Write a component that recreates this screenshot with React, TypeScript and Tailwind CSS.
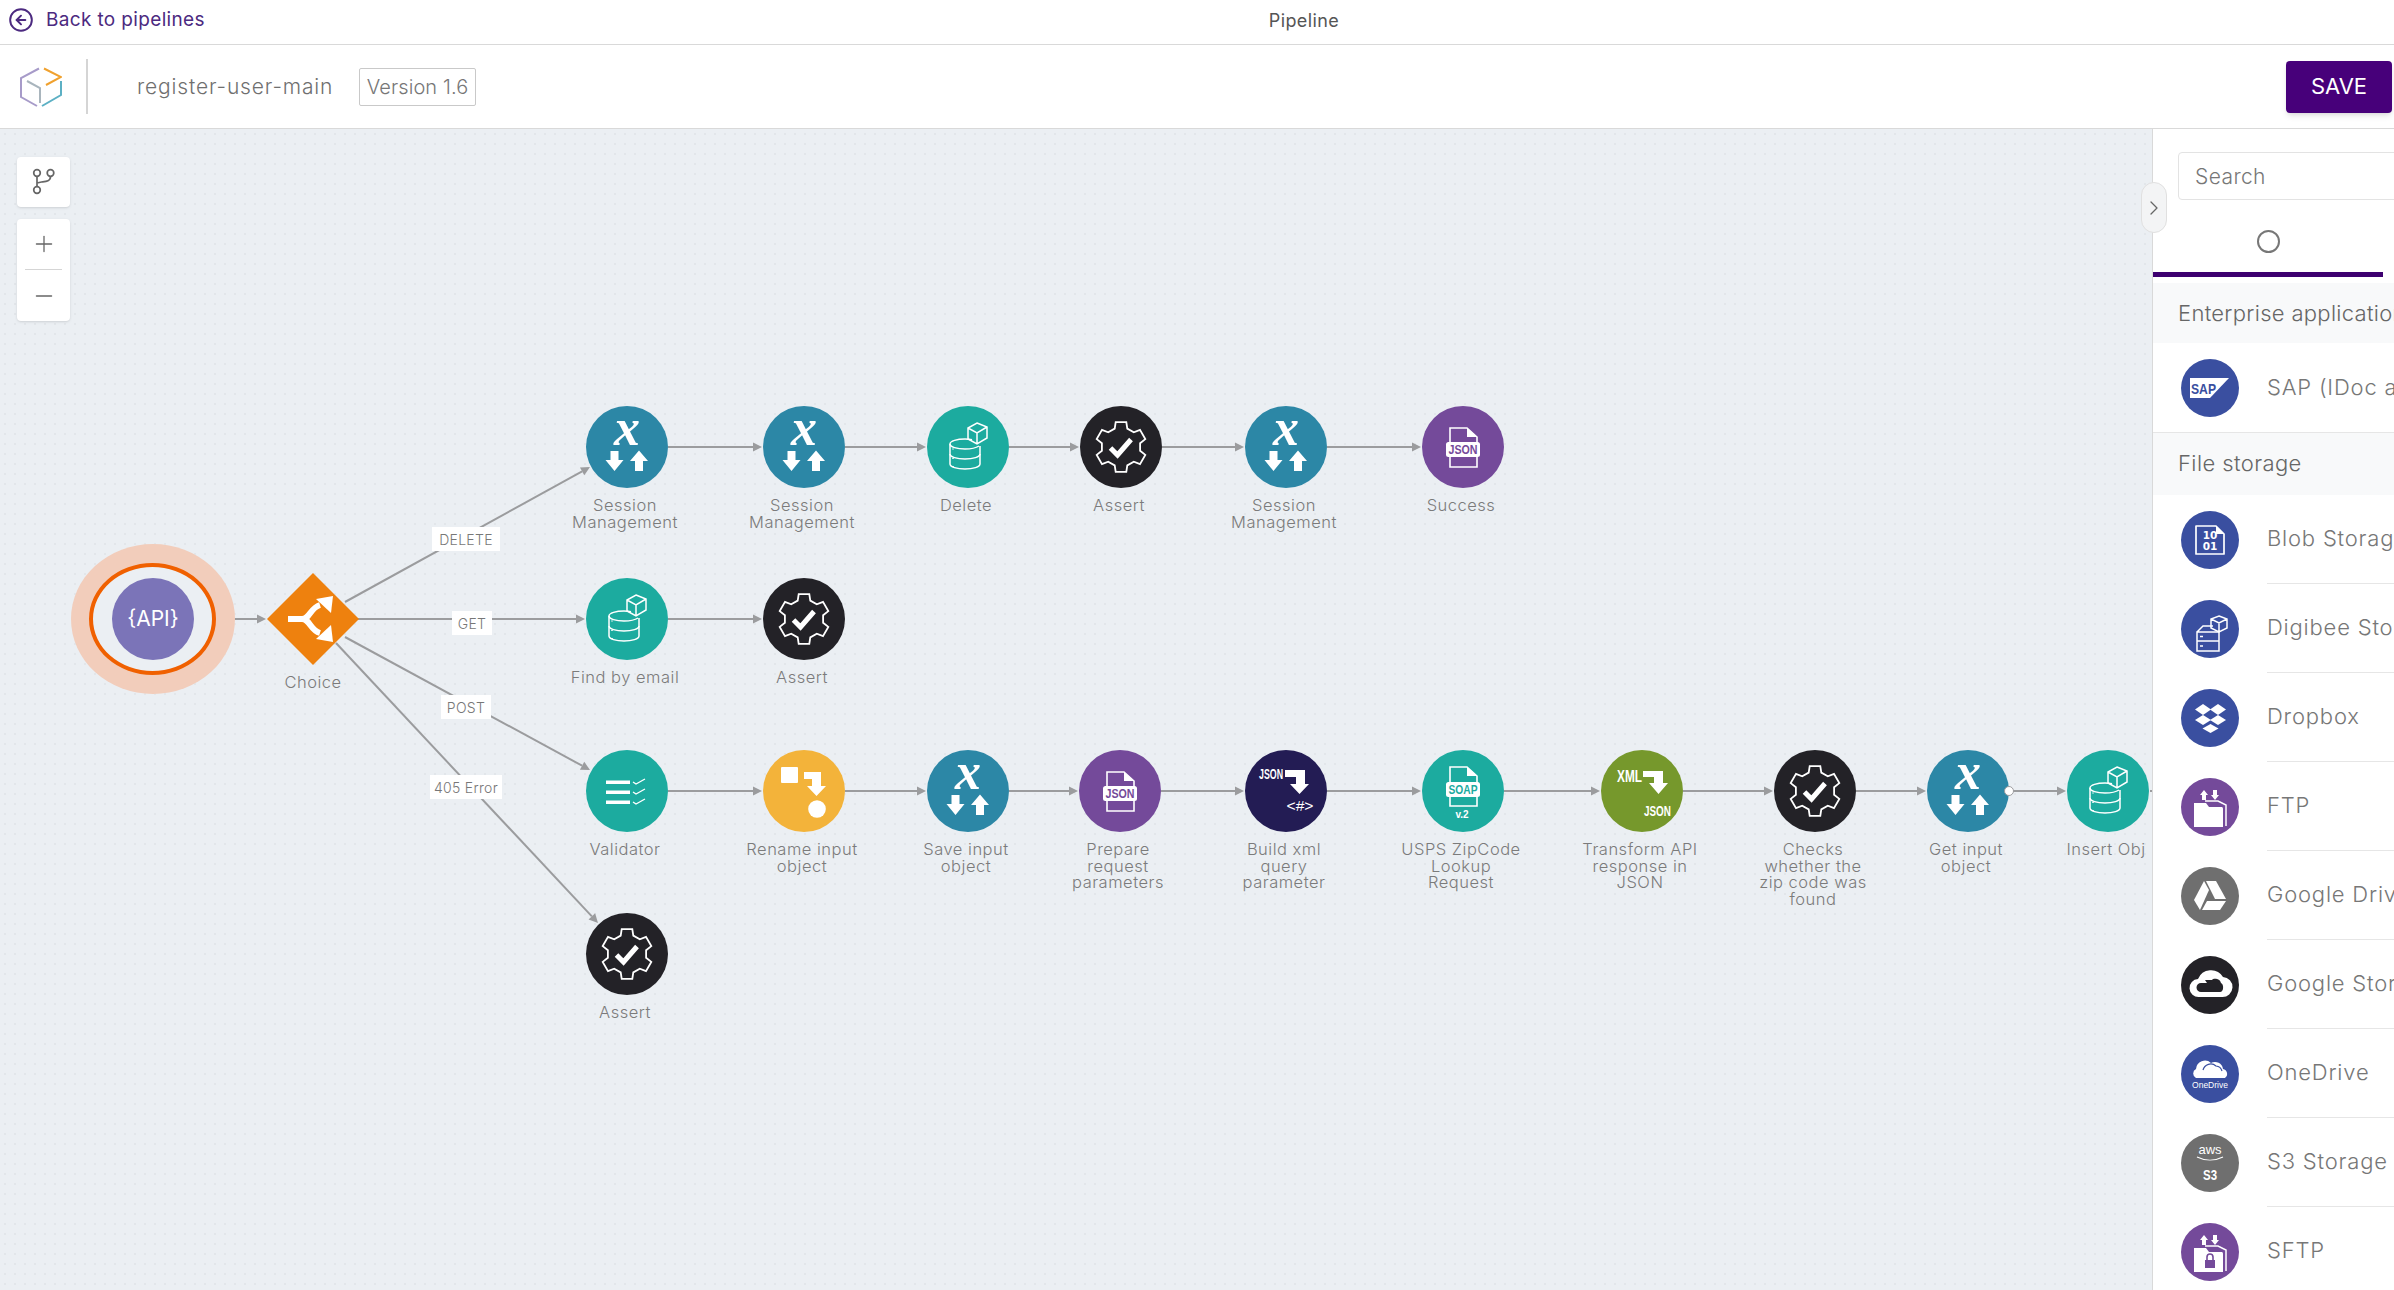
import { ChevronRight, CircleArrowLeft, Minus, Plus } from "lucide-react";
import type { ReactNode } from "react";

const narrow = "Liberation Sans";

// --- pipeline step icons, all in an 82x82 box ---
const gear = Array.from({ length: 6 }, (_, i) => {
  const a = -90 + i * 60;
  return [
    [19.5, a - 19],
    [25.5, a - 12],
    [25.5, a + 12],
    [19.5, a + 19],
  ]
    .map(([r, d]) => {
      const rad = (d * Math.PI) / 180;
      return `${(41 + r * Math.cos(rad)).toFixed(1)},${(41 + r * Math.sin(rad)).toFixed(1)}`;
    })
    .join(" ");
}).join(" ");

function AssertIcon() {
  return (
    <>
      <polygon points={gear} fill="none" stroke="#fff" strokeWidth="1.8" />
      <polyline points="30.5,42 37.5,49 51,33.5" fill="none" stroke="#fff" strokeWidth="5" />
    </>
  );
}

function SessionIcon() {
  return (
    <>
      <text x="41" y="39" textAnchor="middle" fontFamily="Liberation Serif" fontStyle="italic" fontWeight="700" fontSize="52" fill="#fff">
        x
      </text>
      <polygon points="24.5,45 32.5,45 32.5,54 37.5,54 28.5,65 19.5,54 24.5,54" fill="#fff" />
      <polygon points="49,65 57,65 57,55 62,55 53,44.5 44,55 49,55" fill="#fff" />
    </>
  );
}

function DbIcon() {
  return (
    <g fill="none" stroke="#fff" strokeWidth="1.5">
      <path d="M23 38c0-3 7-5 15-5 3 0 5 .3 7 .8M23 38v20c0 3 7 5 15 5s15-2 15-5V40" />
      <path d="M23 38c0 3 7 5 15 5 6 0 11-1 14-3M23 48c0 3 7 5 15 5s15-2 15-5" />
      <path d="M50 17l10 4v11l-10 6-9-5V22zM41 22l9 5 10-6M50 27v11" />
      <path d="M26 42.5v1M26 52v1M26 60v1" />
    </g>
  );
}

function FileBadge({ label, fill, top, bottom, badgeY }: { label: string; fill: string; top: number; bottom: number; badgeY: number }) {
  return (
    <>
      <path d={`M28 ${top}h17l10 9v${bottom - top - 9}H28z`} fill="none" stroke="#fff" strokeWidth="1.6" />
      <path d={`M45 ${top}v9h10z`} fill="#fff" />
      <rect x="24" y={badgeY} width="34" height="15" rx="2.5" fill="#fff" />
      <text x="41" y={badgeY + 12} textAnchor="middle" fontFamily={narrow} fontWeight="700" fontSize="13" textLength="29" lengthAdjust="spacingAndGlyphs" fill={fill}>
        {label}
      </text>
    </>
  );
}

function ValidatorIcon() {
  return (
    <g>
      <rect x="20" y="30.5" width="24" height="3.5" fill="#fff" />
      <rect x="20" y="40.5" width="24" height="3.5" fill="#fff" />
      <rect x="20" y="50.5" width="24" height="3.5" fill="#fff" />
      <path d="M47 32l3 2 9-5M47 42l3 2 9-5M47 52l3 2 9-5" fill="none" stroke="#fff" strokeWidth="1.3" />
    </g>
  );
}

function RenameIcon() {
  return (
    <>
      <rect x="18" y="17" width="17" height="16" rx="1" fill="#fff" />
      <path d="M41 22h17v14h5l-9.500 10-9.500-10h5v-7h-8z" fill="#fff" />
      <circle cx="54" cy="59" r="8.800" fill="#fff" />
    </>
  );
}

function BuildXmlIcon() {
  return (
    <>
      <text x="14" y="29" fontFamily={narrow} fontWeight="700" fontSize="14" textLength="24" lengthAdjust="spacingAndGlyphs" fill="#fff">
        JSON
      </text>
      <path d="M40 20h20v14h4l-9.500 10-9.500-10h6v-7h-11z" fill="#fff" />
      <text x="55" y="61" textAnchor="middle" fontFamily={narrow} fontWeight="400" fontSize="14.500" textLength="27" lengthAdjust="spacingAndGlyphs" fill="#fff">
        {"<#>"}
      </text>
    </>
  );
}

function SoapIcon() {
  return (
    <>
      <FileBadge label="SOAP" fill="#1cab9f" top={17} bottom={56} badgeY={32} />
      <text x="40" y="68" textAnchor="middle" fontFamily={narrow} fontWeight="700" fontSize="10" fill="#fff">
        v.2
      </text>
    </>
  );
}

function XmlJsonIcon() {
  return (
    <>
      <text x="16" y="32" fontFamily={narrow} fontWeight="700" fontSize="17" textLength="25" lengthAdjust="spacingAndGlyphs" fill="#fff">
        XML
      </text>
      <path d="M42 21h20v12h5l-9.500 11-9.500-11h5v-6h-11z" fill="#fff" />
      <text x="43" y="66" fontFamily={narrow} fontWeight="700" fontSize="15" textLength="27" lengthAdjust="spacingAndGlyphs" fill="#fff">
        JSON
      </text>
    </>
  );
}

const stepStyles: Record<string, { bg: string; icon: ReactNode }> = {
  session: { bg: "bg-[#2c87a6]", icon: <SessionIcon /> },
  db: { bg: "bg-[#1cab9f]", icon: <DbIcon /> },
  assert: { bg: "bg-[#232227]", icon: <AssertIcon /> },
  json: { bg: "bg-[#744a9a]", icon: <FileBadge label="JSON" fill="#744a9a" top={22} bottom={61} badgeY={36} /> },
  validator: { bg: "bg-[#1cab9f]", icon: <ValidatorIcon /> },
  rename: { bg: "bg-[#f3b33a]", icon: <RenameIcon /> },
  build: { bg: "bg-[#231c54]", icon: <BuildXmlIcon /> },
  soap: { bg: "bg-[#1cab9f]", icon: <SoapIcon /> },
  xml: { bg: "bg-[#76982c]", icon: <XmlJsonIcon /> },
};

const r1 = 318;
const r2 = 490;
const r3 = 662;
const r4 = 825;

const steps = [
  { x: 627, y: r1, kind: "session", label: ["Session", "Management"] },
  { x: 804, y: r1, kind: "session", label: ["Session", "Management"] },
  { x: 968, y: r1, kind: "db", label: ["Delete"] },
  { x: 1121, y: r1, kind: "assert", label: ["Assert"] },
  { x: 1286, y: r1, kind: "session", label: ["Session", "Management"] },
  { x: 1463, y: r1, kind: "json", label: ["Success"] },
  { x: 627, y: r2, kind: "db", label: ["Find by email"] },
  { x: 804, y: r2, kind: "assert", label: ["Assert"] },
  { x: 627, y: r3, kind: "validator", label: ["Validator"] },
  { x: 804, y: r3, kind: "rename", label: ["Rename input", "object"] },
  { x: 968, y: r3, kind: "session", label: ["Save input", "object"] },
  { x: 1120, y: r3, kind: "json", label: ["Prepare", "request", "parameters"] },
  { x: 1286, y: r3, kind: "build", label: ["Build xml", "query", "parameter"] },
  { x: 1463, y: r3, kind: "soap", label: ["USPS ZipCode", "Lookup", "Request"] },
  { x: 1642, y: r3, kind: "xml", label: ["Transform API", "response in", "JSON"] },
  { x: 1815, y: r3, kind: "assert", label: ["Checks", "whether the", "zip code was", "found"] },
  { x: 1968, y: r3, kind: "session", label: ["Get input", "object"] },
  { x: 2108, y: r3, kind: "db", label: ["Insert Obj"] },
  { x: 627, y: r4, kind: "assert", label: ["Assert"] },
];

const edges = [
  [194, r2, 266, r2],
  [358, r2, 585, r2],
  [345, 473, 590, 338],
  [345, 508, 590, 641],
  [336, 514, 598, 794],
  [668, r1, 762, r1],
  [845, r1, 926, r1],
  [1009, r1, 1079, r1],
  [1162, r1, 1244, r1],
  [1327, r1, 1421, r1],
  [668, r2, 762, r2],
  [668, r3, 762, r3],
  [845, r3, 926, r3],
  [1009, r3, 1078, r3],
  [1161, r3, 1244, r3],
  [1327, r3, 1421, r3],
  [1504, r3, 1600, r3],
  [1683, r3, 1773, r3],
  [1856, r3, 1926, r3],
  [2009, r3, 2066, r3],
];

function Edges() {
  return (
    <svg className="absolute left-0 top-0" width="2152" height="1161">
      {edges.map(([x1, y1, x2, y2], i) => {
        const a = Math.atan2(y2 - y1, x2 - x1);
        const bx = x2 - 9 * Math.cos(a);
        const by = y2 - 9 * Math.sin(a);
        const nx = 4.5 * Math.sin(a);
        const ny = 4.5 * Math.cos(a);
        return (
          <g key={i}>
            <line x1={x1} y1={y1} x2={bx} y2={by} stroke="#9b9c9e" strokeWidth="2" />
            <polygon points={`${x2},${y2} ${bx + nx},${by - ny} ${bx - nx},${by + ny}`} fill="#9b9c9e" />
          </g>
        );
      })}
      <line x1="2150" y1={r3} x2="2152" y2={r3} stroke="#9b9c9e" strokeWidth="2" />
    </svg>
  );
}

function Step({ x, y, kind, label }: { x: number; y: number; kind: string; label: string[] }) {
  const s = stepStyles[kind];
  return (
    <>
      <div className={`absolute h-[82px] w-[82px] rounded-full ${s.bg}`} style={{ left: x - 41, top: y - 41 }}>
        <svg className="overflow-visible" width="82" height="82" viewBox="0 0 82 82">
          {s.icon}
        </svg>
      </div>
      <div
        className="absolute w-[150px] text-center text-[16.5px] leading-[16.5px] tracking-[0.5px] text-[#7b7b7b]"
        style={{ left: x - 77, top: y + 50 }}
      >
        {label.map((l) => (
          <div key={l} className="whitespace-nowrap">
            {l}
          </div>
        ))}
      </div>
    </>
  );
}

function EdgeLabel({ x, y, w, text }: { x: number; y: number; w: number; text: string }) {
  return (
    <div
      className="absolute flex h-[24px] items-center justify-center bg-white text-[14px] tracking-[0.3px] whitespace-nowrap text-[#777]"
      style={{ left: x, top: y, width: w }}
    >
      {text}
    </div>
  );
}

function ApiTrigger() {
  return (
    <>
      <div className="absolute left-[71px] top-[415px] h-[150px] w-[164px] rounded-[50%] bg-[#f2cdbb]" />
      <div className="absolute left-[89px] top-[434px] h-[112px] w-[127px] rounded-[50%] border-[4px] border-[#f06000] bg-[#ebeff3]" />
      <div className="absolute left-[112px] top-[449px] flex h-[82px] w-[82px] items-center justify-center rounded-full bg-[#7b74b8] text-[21px] font-normal text-white">
        {"{API}"}
      </div>
    </>
  );
}

function Choice() {
  return (
    <>
      <svg className="absolute left-[266px] top-[443px]" width="94" height="94" viewBox="0 0 94 94">
        <polygon points="47,1 93,47 47,93 1,47" fill="#ee810e" />
        <path d="M22 47h14c8 0 8-11 18-14" fill="none" stroke="#fff" strokeWidth="6" />
        <path d="M36 47c8 0 8 11 18 14" fill="none" stroke="#fff" strokeWidth="6" />
        <polygon points="50,27 67,24 65,41" fill="#fff" />
        <polygon points="50,67 67,70 65,53" fill="#fff" />
      </svg>
      <div className="absolute left-[263px] top-[544px] w-[100px] text-center text-[16.5px] leading-[18px] tracking-[0.5px] text-[#7b7b7b]">Choice</div>
    </>
  );
}

// --- connector palette icons, 58x58 ---
function Folder({ children }: { children?: ReactNode }) {
  return (
    <>
      <polygon points="23,12 27,17 25,17 25,22 21,22 21,17 19,17" fill="#fff" />
      <polygon points="34,22 38,17 36,17 36,12 32,12 32,17 30,17" fill="#fff" />
      <path d="M13 25h12l3 4h13a2 2 0 0 1 1 2v18H13z" fill="#fff" />
      <path d="M24 23h13l8 4v21" fill="none" stroke="#fff" strokeWidth="1.500" />
      {children}
    </>
  );
}

const blue = "bg-[#3a4fa0]";
const purple = "bg-[#744a9a]";
const gray = "bg-[#6f6f6f]";

const sapIcon = (
  <>
    <polygon points="9,19 48,19 29,39 9,39" fill="#fff" />
    <text x="10" y="35" fontFamily={narrow} fontWeight="700" fontSize="15" textLength="25" lengthAdjust="spacingAndGlyphs" fill="#3a4fa0">
      SAP
    </text>
  </>
);

const blobIcon = (
  <>
    <path d="M15 15h20l8 8v20H15z" fill="none" stroke="#fff" strokeWidth="1.700" strokeLinejoin="round" />
    <path d="M35 15v8h8z" fill="#fff" />
    <text x="29" y="28" textAnchor="middle" fontFamily="DejaVu Sans" fontWeight="700" fontSize="10.500" fill="#fff">
      10
    </text>
    <text x="29" y="39" textAnchor="middle" fontFamily="DejaVu Sans" fontWeight="700" fontSize="10.500" fill="#fff">
      01
    </text>
  </>
);

const digibeeIcon = (
  <g fill="none" stroke="#fff" strokeWidth="1.500">
    <path d="M16 32l6-6h10M16 32h22v9H16zM16 41h22v10H16z" />
    <path d="M38 16l8 3v9l-8 4-8-4v-9zM30 19l8 4 8-4M38 23v9" />
    <path d="M19 36.500h3M19 46h3" />
  </g>
);

const dropboxIcon = (
  <g fill="#fff">
    <polygon points="22,15 30,20.500 22,26 14,20.500" />
    <polygon points="37,15 45,20.500 37,26 29,20.500" />
    <polygon points="22,26 30,31 22,36 14,31" />
    <polygon points="37,26 45,31 37,36 29,31" />
    <polygon points="29.500,35 37.500,39.500 29.500,44 21.500,39.500" />
  </g>
);

const driveIcon = (
  <g fill="#fff">
    <polygon points="23,14 28,23 19,43 13,33" />
    <polygon points="25,14 35,14 45,32 34,32" />
    <polygon points="26,34 45,34 39,43 21,43" />
  </g>
);

const storageIcon = (
  <>
    <path d="M18 41a9 9 0 0 1-1-18 14 14 0 0 1 25-2 10 10 0 0 1 -1 20z" fill="#fff" />
    <path d="M20 36a4.500 4.500 0 0 1 0-9h6l-2-3h7c1-2 8-2 9 3 3 1 3 9-1 9z" fill="#232227" />
  </>
);

const oneDriveIcon = (
  <>
    <path d="M15 33a5 5 0 0 1 0-9 9 9 0 0 1 15-6 8 8 0 0 1 12 6 5 5 0 0 1 2 9z" fill="#fff" />
    <path d="M22 25a8 8 0 0 1 13-4 7 7 0 0 1 6 5" fill="none" stroke="#3a4fa0" strokeWidth="1.200" />
    <text x="29" y="43" textAnchor="middle" fontFamily={narrow} fontSize="8.500" fill="#fff">
      OneDrive
    </text>
  </>
);

const s3Icon = (
  <>
    <text x="29" y="20" textAnchor="middle" fontFamily={narrow} fontSize="13" fill="#fff">
      aws
    </text>
    <path d="M16 23c8 4 18 4 26 0" fill="none" stroke="#fff" strokeWidth="1.200" />
    <text x="29" y="46" textAnchor="middle" fontFamily={narrow} fontWeight="700" fontSize="15" textLength="14" lengthAdjust="spacingAndGlyphs" fill="#fff">
      S3
    </text>
  </>
);

const sftpIcon = (
  <Folder>
    <rect x="24" y="37" width="10" height="8" fill="#744a9a" />
    <path d="M26 37v-3a3 3 0 0 1 6 0v3" fill="none" stroke="#744a9a" strokeWidth="1.600" />
  </Folder>
);

const fileStorage = [
  { name: "Blob Storage (Azure)", bg: blue, icon: blobIcon },
  { name: "Digibee Storage", bg: blue, icon: digibeeIcon },
  { name: "Dropbox", bg: blue, icon: dropboxIcon },
  { name: "FTP", bg: purple, icon: <Folder /> },
  { name: "Google Drive", bg: gray, icon: driveIcon },
  { name: "Google Storage", bg: "bg-[#232227]", icon: storageIcon },
  { name: "OneDrive", bg: blue, icon: oneDriveIcon },
  { name: "S3 Storage (AWS)", bg: gray, icon: s3Icon },
  { name: "SFTP", bg: purple, icon: sftpIcon },
];

function PaletteIcon({ bg, children }: { bg: string; children: ReactNode }) {
  return (
    <div className={`h-[58px] w-[58px] shrink-0 rounded-full ${bg}`}>
      <svg width="58" height="58" viewBox="0 0 58 58">
        {children}
      </svg>
    </div>
  );
}

function Logo() {
  return (
    <svg width="42" height="40" viewBox="0 0 42 40" fill="none" strokeWidth="2">
      <polyline points="19,1.500 1,11 1,30 17,39" stroke="#a79bc9" />
      <polyline points="7,14 20,21 20,36" stroke="#a9b5bd" />
      <polyline points="22,39 41,28 41,14" stroke="#5cb0c4" />
      <polyline points="24,1.500 41,10 26,18" stroke="#f0a12e" />
    </svg>
  );
}

export default function App() {
  return (
    <div className="flex h-[1290px] w-[2394px] flex-col overflow-hidden bg-white font-[Inter,sans-serif] font-light">
      {/* top bar */}
      <div className="grid h-[45px] shrink-0 grid-cols-[1204px_200px_1fr] items-center border-b border-[#d9d9d9] pb-1">
        <div className="flex items-center gap-[12px] pl-[8px] text-[19px] font-normal tracking-[0.35px] text-[#4c2a80]">
          <CircleArrowLeft size={26} strokeWidth={1.8} />
          <span>Back to pipelines</span>
        </div>
        <div className="text-center text-[18px] font-normal tracking-[0.4px] text-[#555]">Pipeline</div>
      </div>

      {/* name bar */}
      <div className="flex h-[84px] shrink-0 items-center border-b border-[#d9d9d9] pr-[2px]">
        <div className="ml-[20px] shrink-0">
          <Logo />
        </div>
        <div className="ml-[24px] h-[55px] w-[2px] shrink-0 bg-[#d5d5d5]" />
        <div className="ml-[49px] w-[222px] text-[21px] tracking-[0.85px] text-[#6f6f6f]">register-user-main</div>
        <div className="flex h-[38px] w-[117px] items-center justify-center rounded-[2px] border border-[#c9c9c9] text-[20px] tracking-[0.1px] text-[#777]">
          Version 1.6
        </div>
        <button className="ml-auto h-[52px] w-[106px] rounded-[4px] bg-[#47007a] text-[22px] font-normal text-white shadow-md">SAVE</button>
      </div>

      <div className="flex min-h-0 flex-1">
        {/* canvas */}
        <div className="relative w-[2152px] shrink-0 overflow-hidden bg-[#ebeff3] bg-[radial-gradient(#e2e6ea_1px,transparent_1px)] bg-[length:10px_10px]">
          <Edges />
          <ApiTrigger />
          <Choice />
          {steps.map((s, i) => (
            <Step key={i} {...s} />
          ))}
          {/* output handle of the hovered step */}
          <div className="absolute left-[2004px] top-[657px] h-[10px] w-[10px] rounded-full border-[1.5px] border-[#9b9c9e] bg-white" />
          <EdgeLabel x={432} y={398} w={68} text="DELETE" />
          <EdgeLabel x={452} y={482} w={40} text="GET" />
          <EdgeLabel x={441} y={566} w={50} text="POST" />
          <EdgeLabel x={430} y={646} w={72} text="405 Error" />

          <div className="absolute left-[17px] top-[28px] flex flex-col gap-[12px]">
            <div className="h-[50px] w-[53px] rounded-[4px] bg-white shadow-sm">
              <svg width="53" height="50" viewBox="0 0 53 50" fill="none" stroke="#666" strokeWidth="1.700">
                <circle cx="20" cy="16" r="3.300" />
                <circle cx="33.500" cy="16" r="3.300" />
                <circle cx="20" cy="33" r="3.300" />
                <path d="M20 19.500v10M33.500 19.500c0 5-5 5-9 5.500l-4.500 1" />
              </svg>
            </div>
            <div className="flex h-[102px] w-[53px] flex-col items-center rounded-[4px] bg-white text-[#666] shadow-sm">
              <div className="flex h-[50px] items-center">
                <Plus size={26} strokeWidth={1.200} />
              </div>
              <div className="h-px w-[37px] bg-[#d5d5d5]" />
              <div className="flex h-[51px] items-center">
                <Minus size={26} strokeWidth={1.200} />
              </div>
            </div>
          </div>
        </div>

        {/* connector palette */}
        <div className="relative w-[242px] shrink-0 border-l border-[#d9d9d9]">
          <div className="absolute -left-[12px] top-[53px] z-10 flex h-[51px] w-[26px] items-center justify-center rounded-[13px] border border-[#e0e0e0] bg-[#f3f4f5] text-[#666]">
            <ChevronRight size={24} strokeWidth={1.300} />
          </div>
          <div className="h-full w-full overflow-hidden">
            <div className="w-[420px]">
              <div className="pl-[25px] pt-[23px]">
                <div className="flex h-[48px] items-center rounded-[4px] border border-[#e3e3e3] pl-[16px] pt-[2px] text-[21px] tracking-[0.4px] text-[#777]">Search</div>
              </div>
              <div className="flex h-[77px] w-[230px] items-center justify-center border-b-[5px] border-[#3d0070] pt-[10px]">
                <div className="h-[23px] w-[23px] rounded-full border-2 border-[#777]" />
              </div>
              <div className="mt-[6px] flex h-[60px] items-center bg-[#f8f9fa] pl-[25px] text-[22px] tracking-[0.3px] whitespace-nowrap text-[#666]">Enterprise applications</div>
              <div className="flex h-[90px] items-center border-b border-[#e6e6e6] pl-[28px]">
                <PaletteIcon bg={blue}>{sapIcon}</PaletteIcon>
                <div className="ml-[28px] text-[22px] tracking-[0.8px] whitespace-nowrap text-[#777]">SAP (IDoc and BAPI)</div>
              </div>
              <div className="flex h-[62px] items-center bg-[#f8f9fa] pb-[2px] pl-[25px] text-[22px] tracking-[0.4px] text-[#666]">File storage</div>
              {fileStorage.map((item) => (
                <div key={item.name} className="flex h-[89px] items-center pl-[28px]">
                  <PaletteIcon bg={item.bg}>{item.icon}</PaletteIcon>
                  <div className="ml-[28px] flex h-full flex-1 items-center border-b border-[#e6e6e6] pb-[2px] text-[22px] tracking-[0.8px] whitespace-nowrap text-[#777]">{item.name}</div>
                </div>
              ))}
            </div>
          </div>
        </div>
      </div>
    </div>
  );
}
